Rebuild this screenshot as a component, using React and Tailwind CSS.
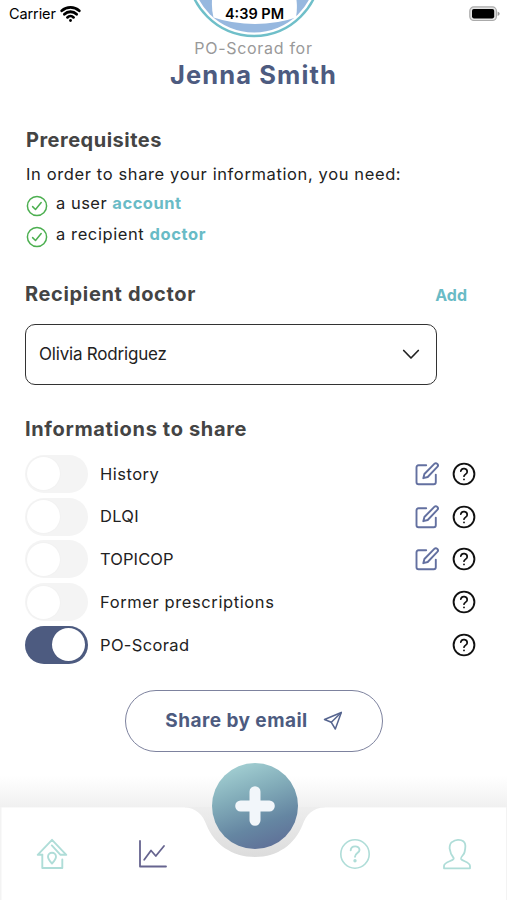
import { Wifi } from 'lucide-react'

const SHARE_ITEMS = [
  { id: 'history', label: 'History', on: false, editable: true, tracking: 'tracking-[0.5px]' },
  { id: 'dlqi', label: 'DLQI', on: false, editable: true, tracking: 'tracking-[0.3px]' },
  { id: 'topicop', label: 'TOPICOP', on: false, editable: true, tracking: 'tracking-[0.1px]' },
  { id: 'former', label: 'Former prescriptions', on: false, editable: false, tracking: 'tracking-[0.6px]' },
  { id: 'po-scorad', label: 'PO-Scorad', on: true, editable: false, tracking: 'tracking-[0.35px]' },
]

/* ── Icons ── */

function LogoIcon() {
  return (
    <svg width="136" height="40" viewBox="186 0 136 40" aria-hidden="true">
      <circle cx="254" cy="-30" r="66" fill="#fff" stroke="#6fbfc9" strokeWidth="2.4" />
      <circle cx="254" cy="-30" r="62.500" fill="#97b8df" />
      <path d="M212 0 Q211.500 10 213.500 17.500 Q233 24 255 24 Q277 24 296 17.500 Q297.500 9 296.500 0Z" fill="#fff" />
    </svg>
  )
}

function BatteryIcon() {
  return (
    <svg width="31" height="16" viewBox="0 0 31 16" aria-hidden="true">
      <rect x="0.8" y="0.9" width="26.600" height="13.600" rx="4" fill="#e3e3e3" stroke="#aaa" strokeWidth="1.200" />
      <rect x="3" y="3" width="22.200" height="9.400" rx="1.800" fill="#000" />
      <path d="M28.600 5.500 Q30.700 6.500 30.700 7.700 Q30.700 8.900 28.600 9.900Z" fill="#999" />
    </svg>
  )
}

function CheckIcon() {
  return (
    <svg width="22" height="22" viewBox="0 0 22 22" fill="none" stroke="#4caf50" strokeWidth="1.500" strokeLinecap="round" strokeLinejoin="round" aria-hidden="true">
      <circle cx="11" cy="11" r="9.600" />
      <path d="M6.600 11.600 L9.500 14.500 L15.200 7.500" />
    </svg>
  )
}

function EditIcon() {
  return (
    <svg width="24" height="24" viewBox="0 0 24 24" fill="none" stroke="#6370a0" strokeWidth="1.900" strokeLinecap="round" strokeLinejoin="round" aria-hidden="true">
      <path d="M11.200 3.300 H3.600 Q1.500 3.300 1.500 5.400 V20.200 Q1.500 22.300 3.600 22.300 H18.700 Q20.800 22.300 20.800 20.200 V12.600" />
      <path d="M19.300 1.900 a2.100 2.100 0 0 1 3 3 L12.700 15 L8.300 16.200 L9.400 12Z" />
    </svg>
  )
}

function HelpIcon() {
  return (
    <svg width="24" height="24" viewBox="0 0 24 24" fill="none" stroke="#111" strokeLinecap="round" strokeLinejoin="round" aria-hidden="true">
      <circle cx="12" cy="12" r="10.400" strokeWidth="1.900" />
      <path d="M8.800 9.100 A3.250 3.250 0 0 1 15.200 10 C15.200 12.200 12 12.400 12 14.200" strokeWidth="1.700" />
      <path d="M12 17.300 V17.400" strokeWidth="1.800" />
    </svg>
  )
}

function SendIcon() {
  return (
    <svg width="20" height="20" viewBox="0 0 20 20" fill="none" stroke="#56658f" strokeWidth="1.500" strokeLinejoin="round" strokeLinecap="round" aria-hidden="true">
      <path d="M18.300 1.500 L1.500 8.500 L8.300 11.300 L12.300 18 Z" />
      <path d="M18.300 1.500 L8.300 11.300" />
    </svg>
  )
}

function HomeIcon() {
  return (
    <svg width="32" height="32" viewBox="0 0 32 32" fill="none" stroke="#afddd8" strokeWidth="1.900" strokeLinejoin="round" strokeLinecap="round" aria-hidden="true">
      <path d="M6.300 16.800 H1.700 L16 1.800 L30.300 16.800 H24.500 L15.800 7.400" />
      <path d="M6.300 16.800 V30 H26.300 V21.500" />
      <path d="M16 25.500 C13.700 23 12 21 12 18.800 A4 4 0 0 1 20 18.800 C20 21 18.300 23 16 25.500Z" />
    </svg>
  )
}

function ChartIcon() {
  return (
    <svg width="30" height="30" viewBox="0 0 30 30" fill="none" stroke="#66648f" strokeWidth="1.800" strokeLinejoin="round" strokeLinecap="round" aria-hidden="true">
      <path d="M2 2 V27.500 H28" />
      <path d="M6.200 20.800 L13 11.500 L17.800 17 L26 7" />
    </svg>
  )
}

function HelpNavIcon() {
  return (
    <svg width="32" height="32" viewBox="0 0 32 32" fill="none" stroke="#afddd8" strokeLinecap="round" aria-hidden="true">
      <circle cx="16" cy="16" r="14.200" strokeWidth="1.600" />
      <path d="M11.700 12.300 C12 7 20.500 7.200 20.500 12 C20.500 15 16 15.300 16 18.800" strokeWidth="1.900" />
      <circle cx="16" cy="22.800" r="0.900" strokeWidth="1.600" />
    </svg>
  )
}

function UserIcon() {
  return (
    <svg width="30" height="32" viewBox="0 0 30 32" fill="none" stroke="#afddd8" strokeWidth="1.800" strokeLinejoin="round" aria-hidden="true">
      <path d="M2 30.300 V28 C2 23.800 10.500 23.300 11.600 20.800 C12.200 19 8.600 17.200 8.400 13.500 L7.600 10.500 C7.600 7 8 5 10.500 3.800 C13 1.500 18.500 1 21.300 3.200 C23.800 5.200 23.600 8 23.200 10.500 L22.600 14 C22 17.200 18.400 18.700 19 20.800 C20 23.300 28 23.700 28 28 V30.300Z" />
    </svg>
  )
}

/* ── Pieces ── */

function Toggle({ on }) {
  return (
    <button
      role="switch"
      aria-checked={on}
      className={
        on
          ? 'flex h-[38px] w-[63px] items-center justify-end rounded-full bg-[#4d5b80] px-[3px]'
          : 'flex h-[38px] w-[63px] items-center rounded-full bg-[#f4f4f4] px-[2px]'
      }
    >
      <span className="size-[33px] rounded-full bg-white shadow-[0_0_2px_rgba(0,0,0,0.04)]" />
    </button>
  )
}

function ShareRow({ item }) {
  return (
    <li className="flex h-[42.750px] items-center">
      <Toggle on={item.on} />
      <span className={`ml-3 text-[16.500px] text-[#222] ${item.tracking}`}>{item.label}</span>
      <span className="ml-auto flex gap-[13px]">
        {item.editable && <EditIcon />}
        <HelpIcon />
      </span>
    </li>
  )
}

function BottomNav() {
  return (
    <nav className="relative mt-auto h-[124px] shrink-0">
      <svg className="absolute inset-0" width="507" height="124" viewBox="0 776 507 124" aria-hidden="true">
        <defs>
          <linearGradient id="nav-shade" x1="0" y1="776" x2="0" y2="807" gradientUnits="userSpaceOnUse">
            <stop offset="0" stopColor="#fff" />
            <stop offset="0.900" stopColor="#f2f2f2" />
            <stop offset="1" stopColor="#f0f0f0" />
          </linearGradient>
          <linearGradient id="notch-shade" x1="0" y1="800" x2="0" y2="857" gradientUnits="userSpaceOnUse">
            <stop offset="0" stopColor="#f0f0f0" />
            <stop offset="1" stopColor="#dcdcdc" />
          </linearGradient>
        </defs>
        <rect x="0" y="776" width="507" height="31.500" fill="url(#nav-shade)" />
        <rect x="0" y="807" width="507" height="93" fill="#f3f3f3" />
        <path d="M185 807 H325 V870 H185Z" fill="url(#notch-shade)" />
        <path d="M1.500 900 V807.500 H184 C196 807.500 203 815 206.500 825 C214 844 232 857 255 857 C278 857 295 844 302.500 825 C306 815 313 807.500 325 807.500 H506 V900Z" fill="#fff" />
      </svg>
      <div className="relative flex items-center pt-[61.500px]">
        <a className="ml-[35.500px]"><HomeIcon /></a>
        <a className="ml-[70.500px]"><ChartIcon /></a>
        <a className="ml-[171px]"><HelpNavIcon /></a>
        <a className="ml-[70.500px]"><UserIcon /></a>
      </div>
      <button
        className="absolute -top-[13px] left-[212px] flex size-[86px] items-center justify-center rounded-full bg-[linear-gradient(160deg,#a6d3d5_5%,#82acb9_38%,#6586a2_68%,#5d6894_100%)]"
        aria-label="Add"
      >
        <svg width="40" height="40" viewBox="0 0 40 40" stroke="#f2f6fa" strokeWidth="11" strokeLinecap="round" aria-hidden="true">
          <path d="M20 5.700 V34.300 M5.700 20 H34.300" />
        </svg>
      </button>
    </nav>
  )
}

export default function App() {
  return (
    <div className="relative flex h-[900px] w-[507px] flex-col overflow-hidden bg-white font-['Inter','Liberation_Sans',sans-serif] text-[#222]">
      <div className="absolute top-0 left-[186px]"><LogoIcon /></div>

      {/* Status bar */}
      <div className="relative grid h-7 grid-cols-3 items-center pr-[7px] pl-[9px] text-[14.500px] text-black">
        <span className="flex items-center gap-1">
          <span className="tracking-[-0.1px]">Carrier</span>
          <Wifi size={21} strokeWidth={3.200} className="-mt-0.5" />
        </span>
        <span className="text-center font-semibold">4:39 PM</span>
        <span className="flex justify-end"><BatteryIcon /></span>
      </div>

      <header className="mt-2 text-center">
        <p className="text-base leading-6 tracking-[0.7px] text-[#999]">PO-Scorad for</p>
        <h1 className="text-[25.500px] leading-[30px] font-bold tracking-[1.1px] text-[#4d5b80]">Jenna Smith</h1>
      </header>

      <section className="mt-9 pl-[26px]">
        <h2 className="text-xl leading-7 font-bold tracking-[0.5px] text-[#444]">Prerequisites</h2>
        <p className="mt-2 text-[16.500px] leading-6 tracking-[0.620px]">In order to share your information, you need:</p>
        <ul>
          <li className="mt-[5px] flex h-[31px] items-start gap-2">
            <span className="mt-[3.500px]"><CheckIcon /></span>
            <span className="text-[16.500px] leading-6 tracking-[0.5px]">a user <b className="font-bold text-[#69bbc6]">account</b></span>
          </li>
          <li className="flex h-[31px] items-start gap-2">
            <span className="mt-[3.500px]"><CheckIcon /></span>
            <span className="text-[16.500px] leading-6 tracking-[0.6px]">a recipient <b className="font-bold text-[#69bbc6]">doctor</b></span>
          </li>
        </ul>
      </section>

      <section className="mt-[27px] pr-10 pl-[25px]">
        <div className="flex items-center justify-between">
          <h2 className="text-xl leading-7 font-bold tracking-[0.650px] text-[#444]">Recipient doctor</h2>
          <a className="mt-0.5 text-base font-bold text-[#69bbc6]">Add</a>
        </div>
        <button className="mt-4 flex h-[61px] w-[412px] items-center justify-between rounded-[10px] border-[1.500px] border-[#333] pr-4 pl-[13px] text-[17px] tracking-[-0.2px]">
          Olivia Rodriguez
          <svg width="18" height="11" viewBox="0 0 18 11" fill="none" stroke="#222" strokeWidth="1.700" strokeLinecap="round" strokeLinejoin="round" aria-hidden="true">
            <path d="M1.700 1.500 L9 9 L16.300 1.500" />
          </svg>
        </button>
      </section>

      <section className="mt-[29.500px] pr-[31px] pl-[25px]">
        <h2 className="text-xl leading-7 font-bold tracking-[0.650px] text-[#444]">Informations to share</h2>
        <ul className="mt-2.5">
          {SHARE_ITEMS.map((item) => (
            <ShareRow key={item.id} item={item} />
          ))}
        </ul>
      </section>

      <button className="mt-6 ml-[125px] flex h-[62px] w-[258px] shrink-0 items-center justify-center gap-[15px] rounded-full border-[1.500px] border-[#7d829e] text-[19px] font-bold tracking-[0.450px] text-[#4d5b80]">
        Share by email
        <SendIcon />
      </button>

      <BottomNav />
    </div>
  )
}
